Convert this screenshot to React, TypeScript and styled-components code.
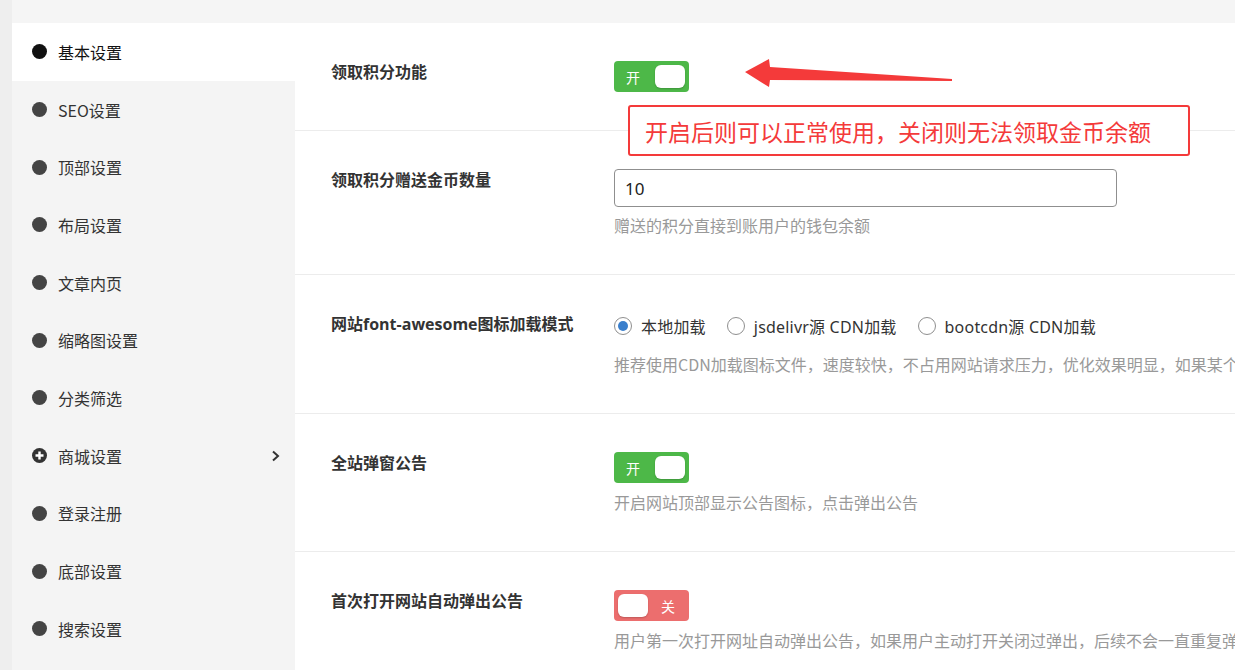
import React from 'react';
import styled, { createGlobalStyle } from 'styled-components';

const GlobalStyle = createGlobalStyle`
  html, body {
    margin: 0;
    padding: 0;
    width: 1235px;
    height: 670px;
    overflow: hidden;
    background: #ededed;
    font-family: "Noto Sans", "Noto Sans CJK SC", sans-serif;
  }
`;

const Page = styled.div`
  display: flex;
  height: 670px;
`;

const LeftStrip = styled.div`
  width: 12px;
  flex-shrink: 0;
  background: #eeeeee;
`;

const Main = styled.div`
  flex: 1;
  display: flex;
  flex-direction: column;
  min-width: 0;
`;

const TopBar = styled.div`
  height: 23px;
  flex-shrink: 0;
  background: #f5f5f5;
`;

const Body = styled.div`
  flex: 1;
  display: flex;
  min-height: 0;
`;

const Sidebar = styled.nav`
  width: 283px;
  flex-shrink: 0;
  background: #f4f4f4;
`;

const NavItem = styled.div<{ $active?: boolean }>`
  height: 57.7px;
  display: flex;
  align-items: center;
  padding: 0 14px 0 20px;
  background: ${(p) => (p.$active ? '#ffffff' : 'transparent')};
  color: ${(p) => (p.$active ? '#111' : '#333')};
  font-size: 16px;
  font-family: "Noto Sans CJK SC", sans-serif;
`;

const Bullet = styled.span<{ $active?: boolean }>`
  width: 15px;
  height: 15px;
  border-radius: 50%;
  background: ${(p) => (p.$active ? '#111' : '#444')};
  margin-right: 11px;
  flex-shrink: 0;
`;

const NavText = styled.span`
  flex: 1;
`;

const Content = styled.main`
  position: relative;
  flex: 1;
  background: #fff;
  min-width: 0;
  overflow: hidden;
`;

const Row = styled.section`
  display: grid;
  grid-template-columns: 283px 1fr;
  padding: 38px 0 38px 36px;
  border-bottom: 1px solid #ececec;
`;

const Label = styled.div`
  font-family: "Open Sans", "Noto Sans CJK SC", sans-serif;
  font-size: 16px;
  font-weight: 700;
  line-height: 22px;
  color: #333;
`;

const Field = styled.div`
  display: flex;
  flex-direction: column;
  align-items: flex-start;
  min-width: 0;
`;

const Desc = styled.div<{ $gap?: number }>`
  margin-top: ${(p) => p.$gap ?? 8}px;
  font-family: "Noto Sans CJK SC", sans-serif;
  font-size: 16px;
  line-height: 22px;
  color: #999;
  white-space: nowrap;
`;

const SwitchBox = styled.div<{ $on: boolean }>`
  width: 75px;
  height: 31px;
  border-radius: 4px;
  background: ${(p) => (p.$on ? '#4db848' : '#ec6e6e')};
  display: flex;
  align-items: center;
  flex-direction: ${(p) => (p.$on ? 'row' : 'row-reverse')};
  justify-content: space-between;
  padding-left: ${(p) => (p.$on ? 12 : 4)}px;
  padding-right: ${(p) => (p.$on ? 4 : 14)}px;
  box-sizing: border-box;
`;

const SwitchText = styled.span`
  color: #fff;
  font-size: 14px;
  font-family: "Noto Sans CJK SC", sans-serif;
`;

const Knob = styled.span`
  width: 30px;
  height: 23px;
  border-radius: 6px;
  background: #fff;
  box-shadow: 0 1px 2px rgba(0, 0, 0, 0.2);
`;

const TextInput = styled.input`
  width: 503px;
  height: 38px;
  box-sizing: border-box;
  border: 1px solid #8f8f8f;
  border-radius: 4px;
  padding: 0 10px;
  font-family: "Noto Sans", sans-serif;
  font-size: 17px;
  color: #222;
  outline: none;
`;

const RadioGroup = styled.div`
  display: flex;
  align-items: center;
  height: 26px;
  gap: 21px;
`;

const RadioOption = styled.label`
  display: flex;
  align-items: center;
  gap: 9px;
  font-family: "Noto Sans", "Noto Sans CJK SC", sans-serif;
  font-size: 16px;
  letter-spacing: 0.2px;
  color: #333;
`;

const RadioDot = styled.span<{ $checked?: boolean }>`
  width: 18px;
  height: 18px;
  box-sizing: border-box;
  border-radius: 50%;
  border: 1px solid #8f8f8f;
  background: #fff;
  display: flex;
  align-items: center;
  justify-content: center;
  &::after {
    content: '';
    width: 10px;
    height: 10px;
    border-radius: 50%;
    background: ${(p) => (p.$checked ? '#3a7fcc' : 'transparent')};
  }
`;

const Callout = styled.div`
  position: absolute;
  left: 333px;
  top: 82px;
  width: 562px;
  height: 51px;
  box-sizing: border-box;
  border: 2px solid #f43a3a;
  border-radius: 3px;
  background: #fff;
  display: flex;
  align-items: center;
  padding-left: 15px;
  font-family: "Noto Sans CJK SC", sans-serif;
  font-size: 23px;
  color: #f43a3a;
  white-space: nowrap;
`;

const ArrowSvg = styled.svg`
  position: absolute;
  left: 440px;
  top: 7px;
`;

const Switch = ({ on }: { on: boolean }) => (
  <SwitchBox $on={on}>
    <SwitchText>{on ? '开' : '关'}</SwitchText>
    <Knob />
  </SwitchBox>
);

const PlusCircle = () => (
  <svg width="15" height="15" viewBox="0 0 15 15" style={{ marginRight: 11, flexShrink: 0 }}>
    <circle cx="7.5" cy="7.5" r="7.5" fill="#333" />
    <path d="M7.5 3.5v8M3.5 7.5h8" stroke="#fff" strokeWidth="2.4" />
  </svg>
);

const Chevron = () => (
  <svg width="10" height="12" viewBox="0 0 10 12">
    <path d="M2 1.5l5 4.5-5 4.5" fill="none" stroke="#333" strokeWidth="2" />
  </svg>
);

const navItems = [
  '基本设置',
  'SEO设置',
  '顶部设置',
  '布局设置',
  '文章内页',
  '缩略图设置',
  '分类筛选',
  '商城设置',
  '登录注册',
  '底部设置',
  '搜索设置',
];

export default function App() {
  return (
    <>
      <GlobalStyle />
      <Page>
        <LeftStrip />
        <Main>
          <TopBar />
          <Body>
            <Sidebar>
              {navItems.map((item, i) => (
                <NavItem key={item} $active={i === 0}>
                  {item === '商城设置' ? <PlusCircle /> : <Bullet $active={i === 0} />}
                  <NavText>{item}</NavText>
                  {item === '商城设置' && <Chevron />}
                </NavItem>
              ))}
            </Sidebar>
            <Content>
              <Row>
                <Label>领取积分功能</Label>
                <Field>
                  <Switch on />
                </Field>
              </Row>
              <Row>
                <Label>领取积分赠送金币数量</Label>
                <Field>
                  <TextInput defaultValue="10" />
                  <Desc $gap={7}>赠送的积分直接到账用户的钱包余额</Desc>
                </Field>
              </Row>
              <Row>
                <Label>网站font-awesome图标加载模式</Label>
                <Field>
                  <RadioGroup>
                    <RadioOption>
                      <RadioDot $checked />
                      本地加载
                    </RadioOption>
                    <RadioOption>
                      <RadioDot />
                      jsdelivr源 CDN加载
                    </RadioOption>
                    <RadioOption>
                      <RadioDot />
                      bootcdn源 CDN加载
                    </RadioOption>
                  </RadioGroup>
                  <Desc $gap={14}>
                    推荐使用CDN加载图标文件，速度较快，不占用网站请求压力，优化效果明显，如果某个CDN加载失败，请切换其它方式
                  </Desc>
                </Field>
              </Row>
              <Row>
                <Label>全站弹窗公告</Label>
                <Field>
                  <Switch on />
                  <Desc $gap={8}>开启网站顶部显示公告图标，点击弹出公告</Desc>
                </Field>
              </Row>
              <Row>
                <Label>首次打开网站自动弹出公告</Label>
                <Field>
                  <Switch on={false} />
                  <Desc $gap={8}>
                    用户第一次打开网址自动弹出公告，如果用户主动打开关闭过弹出，后续不会一直重复弹出
                  </Desc>
                </Field>
              </Row>

              <ArrowSvg width="230" height="70" viewBox="0 0 230 70">
                <polygon
                  points="10,42 34,29 35,37 217,49 217,51 35,50 34,57"
                  fill="#f43a3a"
                />
              </ArrowSvg>
              <Callout>开启后则可以正常使用，关闭则无法领取金币余额</Callout>
            </Content>
          </Body>
        </Main>
      </Page>
    </>
  );
}
